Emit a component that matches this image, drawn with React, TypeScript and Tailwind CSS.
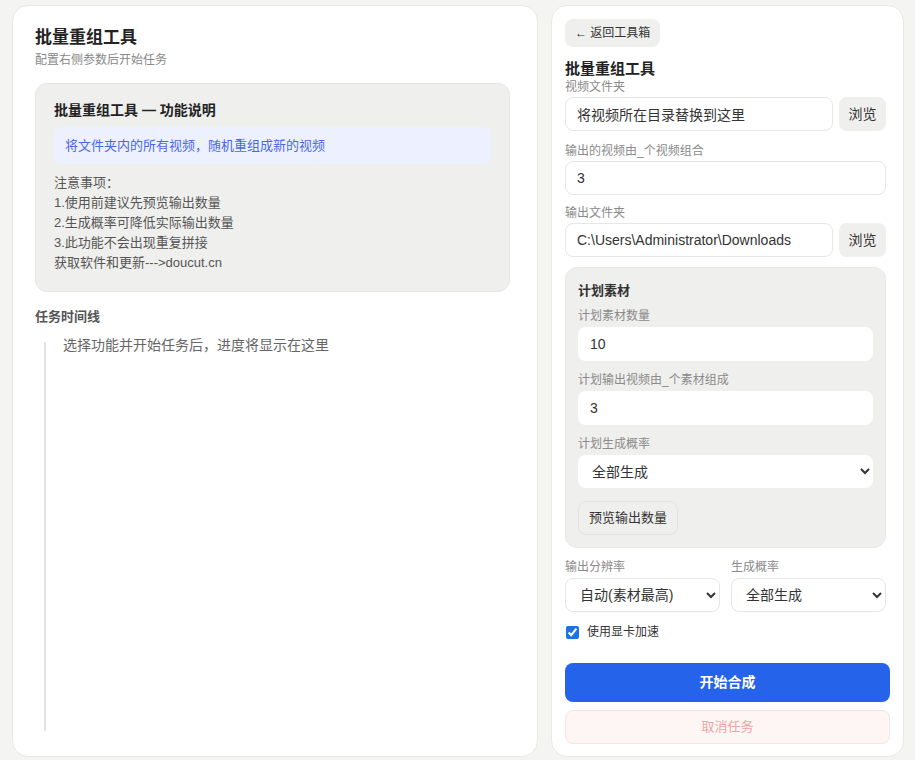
import { ChangeEvent, useState } from "react";

const labelCls = "block text-[12px] leading-4 text-[#8a8a8a]";
const inputCls =
    "w-full h-[34px] rounded-lg border border-[#e6e6e4] bg-white px-[11px] text-[14px] text-[#333] outline-none";
const grayBtn = "rounded-lg bg-[#efefed] text-[#333]";

const notes = [
    "注意事项：",
    "1.使用前建议先预览输出数量",
    "2.生成概率可降低实际输出数量",
    "3.此功能不会出现重复拼接",
    "获取软件和更新--->doucut.cn",
];

function InfoPanel() {
    return (
        <div className="mt-[13px] rounded-xl border border-[#e6e6e4] bg-[#efefed] px-[18px] pt-[14px] pb-[18px]">
            <h2 className="text-[14px] leading-6 font-bold text-[#222]">批量重组工具 — 功能说明</h2>
            <div className="mt-[5px] flex h-[37px] items-center rounded-lg bg-[#edf1ff] px-[11px] text-[13px] text-[#4a67e8]">
                将文件夹内的所有视频，随机重组成新的视频
            </div>
            <div className="mt-[9px] text-[13px] leading-5 text-[#555]">
                {notes.map((n) => (
                    <p key={n}>{n}</p>
                ))}
            </div>
        </div>
    );
}

function Timeline() {
    return (
        <>
            <h3 className="mt-[15px] text-[13px] leading-5 font-bold text-[#555]">任务时间线</h3>
            <div className="mt-[15px] ml-[9px] flex h-[389px] flex-col border-l-2 border-[#e2e2e0] pl-[17px]">
                <p className="-mt-[7px] text-[14px] leading-5 text-[#666]">选择功能并开始任务后，进度将显示在这里</p>
            </div>
        </>
    );
}

function PathField({ label, value, className }: { label: string; value: string; className: string }) {
    const [val, setVal] = useState(value);
    return (
        <div className={className}>
            <label className={labelCls}>{label}</label>
            <div className="mt-[2px] flex gap-[6px]">
                <input
                    className={inputCls}
                    value={val}
                    onChange={(e: ChangeEvent<HTMLInputElement>) => setVal(e.target.value)}
                />
                <button className={`${grayBtn} h-[34px] w-[47px] shrink-0 text-[14px]`}>浏览</button>
            </div>
        </div>
    );
}

function PlanBox() {
    return (
        <div className="mt-[10px] rounded-xl border border-[#e8e8e6] bg-[#efefed] px-[12px] pt-[13px] pb-[12px]">
            <h4 className="text-[13px] leading-5 font-bold text-[#333]">计划素材</h4>
            <label className={`${labelCls} mt-[7px]`}>计划素材数量</label>
            <input className={`${inputCls} mt-[3px] h-[32px] border-transparent`} defaultValue="10" />
            <label className={`${labelCls} mt-[11px]`}>计划输出视频由_个素材组成</label>
            <input className={`${inputCls} mt-[3px] h-[32px] border-transparent`} defaultValue="3" />
            <label className={`${labelCls} mt-[11px]`}>计划生成概率</label>
            <select className="mt-[3px] h-[33px] w-full rounded-lg bg-white px-[10px] text-[14px] text-[#333] outline-none">
                <option>全部生成</option>
                <option>50%</option>
            </select>
            <button className="mt-[13px] h-[34px] rounded-lg border border-[#e4e4e2] bg-[#efefed] px-[10px] text-[13px] text-[#333]">
                预览输出数量
            </button>
        </div>
    );
}

export default function App() {
    return (
        <div className="flex h-[760px] gap-[13px] bg-[#f4f4f2] pt-[5px] pb-[3px] pl-3 pr-[11px] font-['Liberation_Sans','Noto_Sans_CJK_SC',sans-serif]">
            {/* left: description + timeline */}
            <section className="w-[526px] rounded-2xl border border-[#e8e8e6] bg-white pt-[20px] pr-[27px] pl-[22px]">
                <h1 className="text-[17px] leading-6 font-bold text-[#222]">批量重组工具</h1>
                <p className="text-[12px] leading-5 text-[#888]">配置右侧参数后开始任务</p>
                <InfoPanel />
                <Timeline />
            </section>

            {/* right: form */}
            <section className="w-[353px] rounded-2xl border border-[#e8e8e6] bg-white px-[13px] pt-[13px]">
                <button className={`${grayBtn} h-[28px] px-[10px] text-[12px]`}>← 返回工具箱</button>
                <div className="pr-[4px]">
                    <h2 className="mt-[12px] text-[15px] leading-5 font-bold text-[#222]">批量重组工具</h2>
                    <PathField label="视频文件夹" value="将视频所在目录替换到这里" className="" />
                    <div className="mt-[12px]">
                        <label className={labelCls}>输出的视频由_个视频组合</label>
                        <input className={`${inputCls} mt-[2px]`} defaultValue="3" />
                    </div>
                    <PathField label="输出文件夹" value="C:\Users\Administrator\Downloads" className="mt-[10px]" />
                    <PlanBox />
                    <div className="mt-[11px] grid grid-cols-2 gap-[11px]">
                        <div>
                            <label className={labelCls}>输出分辨率</label>
                            <select className="mt-[3px] h-[34px] w-full rounded-lg border border-[#e6e6e4] bg-white px-[10px] text-[14px] text-[#333] outline-none">
                                <option>自动(素材最高)</option>
                                <option>1080P</option>
                            </select>
                        </div>
                        <div>
                            <label className={labelCls}>生成概率</label>
                            <select className="mt-[3px] h-[34px] w-full rounded-lg border border-[#e6e6e4] bg-white px-[10px] text-[14px] text-[#333] outline-none">
                                <option>全部生成</option>
                                <option>50%</option>
                            </select>
                        </div>
                    </div>
                    <label className="mt-[10px] flex h-5 items-center gap-[8px] pl-[1px] text-[12px] text-[#333]">
                        <input type="checkbox" defaultChecked className="h-[13px] w-[13px] accent-[#1a73e8]" />
                        使用显卡加速
                    </label>
                </div>
                <button className="mt-[21px] h-[39px] w-full rounded-lg bg-[#2563eb] text-[14px] font-bold text-white">
                    开始合成
                </button>
                <button className="mt-[8px] h-[34px] w-full rounded-lg border border-[#fbe1e1] bg-[#fef5f5] text-[13px] text-[#eea5a5]">
                    取消任务
                </button>
            </section>
        </div>
    );
}
